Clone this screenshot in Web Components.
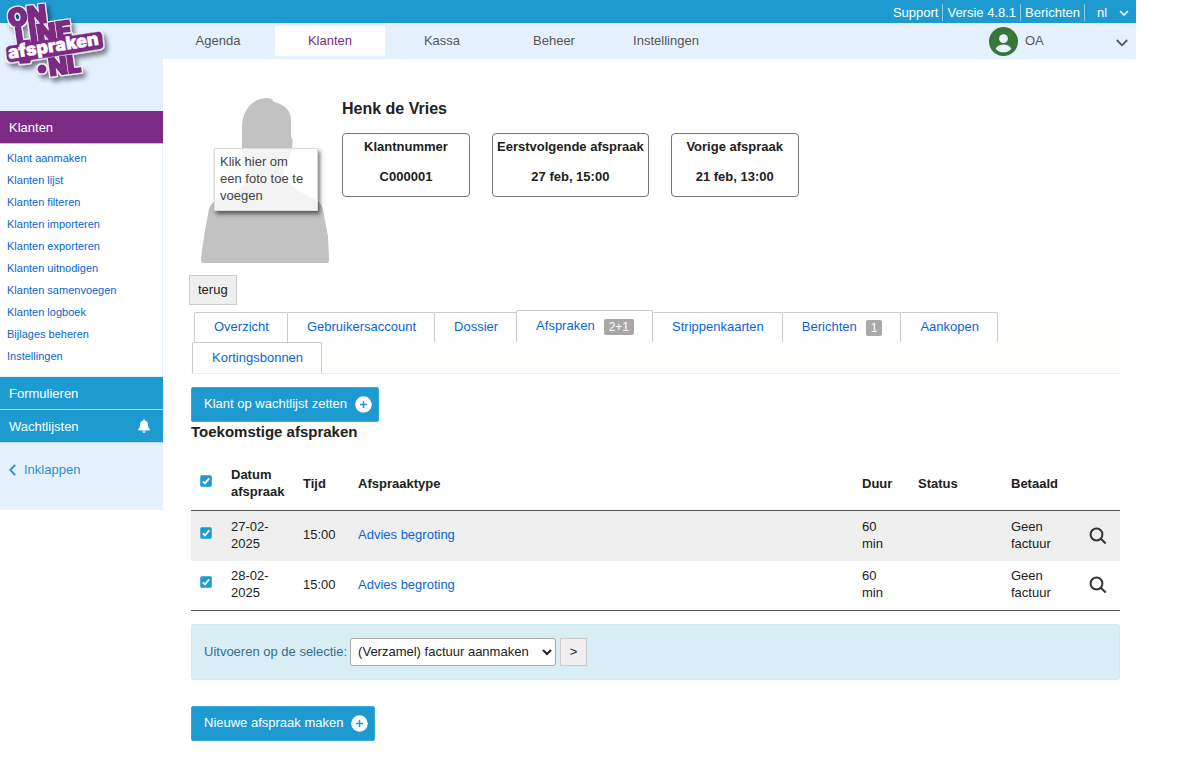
<!DOCTYPE html>
<html lang="nl">
<head>
<meta charset="utf-8">
<meta name="viewport" content="width=device-width, initial-scale=1">
<title>Klanten - Henk de Vries</title>
<style>
  html { background: #fff; }
  body {
    margin: 0;
    --blue: #1d9bd1;
    --purple: #7b2b83;
    --pale: #e5f1ff;
    --link: #0a66cf;
    color: #212121;
    font: 13px/17px "Liberation Sans", Arial, sans-serif;
  }
</style>
</head>
<body>
<oa-app></oa-app>

<script>
const define = (name, html, setup) => {
  const template = document.createElement('template');
  template.innerHTML = `<style>*{box-sizing:border-box}a{text-decoration:none}button,select{font:inherit;margin:0}:host([hidden]){display:none}</style>` + html;
  customElements.define(name, class extends HTMLElement {
    constructor() {
      super();
      this.attachShadow({ mode: 'open' }).append(template.content.cloneNode(true));
    }
    connectedCallback() { if (setup) setup(this, this.shadowRoot); }
  });
};

define('oa-logo', `
<style>
  :host { display: block; }
  a { display: block; width: 110px; height: 88px; }
  svg { display: block; overflow: visible; }
  text { font-family: Inter, "Liberation Sans", Arial, sans-serif; font-weight: 900; }
</style>
<a href="#" aria-label="Onlineafspraken.nl">
  <svg width="110" height="88" viewBox="0 0 110 88">
    <defs>
      <filter id="edge" x="-20%" y="-20%" width="150%" height="150%">
        <feMorphology in="SourceAlpha" operator="dilate" radius="1.3" result="fat"/>
        <feFlood flood-color="#f4effa"/>
        <feComposite in2="fat" operator="in" result="rim"/>
        <feGaussianBlur in="fat" stdDeviation="2.5"/>
        <feOffset dx="3" dy="4"/>
        <feComponentTransfer result="shade"><feFuncA type="linear" slope=".5"/></feComponentTransfer>
        <feMerge><feMergeNode in="shade"/><feMergeNode in="rim"/><feMergeNode in="SourceGraphic"/></feMerge>
      </filter>
    </defs>
    <g filter="url(#edge)" fill="#7b2b83" stroke="#7b2b83" stroke-width="1.800">
      <text transform="translate(9 27) rotate(-7)" font-size="25">ON</text>
      <text transform="translate(17 46) rotate(-8)" font-size="25">LINE</text>
      <path stroke-width=".5" d="M9 46 Q6 47 6 50 L7 59 Q9 63 13 62 L19 61 L20 64 L30 63 L31 60 L57 56 L100 49 Q104 48 103 44 L102 35 Q101 31 97 32 L70 36 Z"/>
      <circle cx="42" cy="69" r="4.500" stroke="none"/>
      <text transform="translate(50 76) rotate(-8)" font-size="24">NL</text>
    </g>
    <text transform="translate(9 59) rotate(-9)" font-size="18" fill="#fff" stroke="#fff" stroke-width=".4">afspraken</text>
  </svg>
</a>`);

define('oa-topbar', `
<style>
  :host { display: flex; justify-content: flex-end; align-items: center; height: 23px; padding: 2px 7px 0 0; background: var(--blue); color: #fff; }
  a { color: #fff; padding: 0 4px; border-right: 1px solid #8ccbe8; }
  label { display: grid; align-items: center; margin-left: 12px; width: 32px; }
  select, svg { grid-area: 1 / 1; }
  select { appearance: none; border: 0; padding: 0; background: none; color: #fff; width: 32px; }
  option { color: #212121; }
  svg { justify-self: end; pointer-events: none; }
</style>
<a href="#">Support</a><a href="#">Versie 4.8.1</a><a href="#">Berichten</a>
<label><select aria-label="Taal"><option>nl</option></select>
  <svg width="10" height="6" viewBox="0 0 10 6" fill="none" stroke="#fff" stroke-width="1.6"><path d="M1 1l4 4 4-4"/></svg>
</label>`);

define('oa-nav', `
<style>
  :host { display: flex; align-items: center; height: 36px; background: var(--pale); }
  nav { display: flex; gap: 2px; }
  a { width: 110px; height: 30px; line-height: 29px; text-align: center; color: #555; }
  a[aria-current] { background: #fff; color: var(--purple); }
  button { display: flex; align-items: center; margin-left: auto; padding: 0; border: 0; background: none; color: #555; width: 147px; margin-right: 0; }
  .name { margin: -2px auto 0 7px; }
  .arrow { margin: 4px 8px 0 0; }
  .face { margin-top: 1px; }
</style>
<nav>
  <a href="#">Agenda</a><a href="#" aria-current="page">Klanten</a><a href="#">Kassa</a><a href="#">Beheer</a><a href="#">Instellingen</a>
</nav>
<button type="button">
  <svg class="face" width="29" height="29" viewBox="0 0 30 30"><circle cx="15" cy="15" r="15" fill="#37763b"/><circle cx="15" cy="12" r="4.6" fill="#e8f2fb"/><path d="M6.8 22.4c1.7-3.100 4.800-4.300 8.200-4.300s6.500 1.200 8.200 4.300c-1.800 2.300-5 3.800-8.200 3.800s-6.400-1.500-8.200-3.800z" fill="#e8f2fb"/></svg>
  <span class="name">OA</span>
  <svg class="arrow" width="12" height="8" viewBox="0 0 12 8" fill="none" stroke="#555" stroke-width="1.8"><path d="M.8 1L6 6.300 11.200 1"/></svg>
</button>`);

define('oa-side', `
<style>
  :host { display: block; background: var(--pale); padding-bottom: 32px; }
  .brand { height: 111px; }
  .head { display: flex; align-items: center; justify-content: space-between; height: 33px; padding: 0 13px 0 9px; color: #fff; background: var(--blue); border-bottom: 1px solid #b9dcf0; }
  .head.on { background: var(--purple); border-color: #cfb5d6; }
  ul { list-style: none; margin: 0 1px 1px 0; padding: 3px 7px 9px; background: #fff; font-size: 11px; line-height: 22px; }
  li a { color: var(--link); }
  button { display: flex; align-items: center; gap: 8px; margin: 18px 0 0 9px; padding: 0; border: 0; background: none; color: #2a93c8; }
</style>
<div class="brand"></div>
<a class="head on" href="#">Klanten</a>
<ul></ul>
<a class="head" href="#">Formulieren</a>
<a class="head" href="#">Wachtlijsten
  <svg width="12" height="14" viewBox="0 0 12 14" fill="#fff"><path d="M5.200 1a.8.8 0 0 1 1.600 0v.5c2 .4 3.200 2 3.200 4.100 0 2.700.8 3.600 1.600 4.500.6.700.2 1.500-.6 1.500H1c-.8 0-1.200-.8-.6-1.500C1.200 9.200 2 8.300 2 5.600 2 3.500 3.200 1.900 5.200 1.500z"/><path d="M4.500 12.300h3a1.500 1.500 0 0 1-3 0z"/></svg>
</a>
<button type="button"><svg width="7" height="12" viewBox="0 0 7 12" fill="none" stroke="#2a93c8" stroke-width="1.900"><path d="M6.200.8L1.200 6l5 5.200"/></svg>Inklappen</button>`,
(host, root) => {
  root.querySelector('ul').innerHTML = ['Klant aanmaken', 'Klanten lijst', 'Klanten filteren', 'Klanten importeren', 'Klanten exporteren', 'Klanten uitnodigen', 'Klanten samenvoegen', 'Klanten logboek', 'Bijlages beheren', 'Instellingen']
    .map(t => `<li><a href="#">${t}</a></li>`).join('');
});

define('oa-photo', `
<style>
  :host { display: grid; width: 128px; height: 166px; }
  svg, button { grid-area: 1 / 1; }
  button { align-self: start; margin: 51px 0 0 13px; width: 104px; height: 63px; padding: 0 5px 2px; text-align: left; line-height: 17px; color: #444; background: rgba(255,255,255,.8); border: 1px solid #ddd; box-shadow: 2px 3px 4px rgba(0,0,0,.55); }
</style>
<svg width="128" height="166" viewBox="0 0 128 166" fill="#c2c2c2"><path d="M66 1c3 0 5 1 7 4 2 0 4 1 6 2 8 4 11 9 11 16v17c2 2 2 6 1 10-1 9-4 15-8 22-2 6 1 11 8 17 8 6 16 10 24 14 4 2 6 5 7 10 2 9 3 18 5 26l1 22c0 3 0 5-2 5H2c-2 0-2-2-2-5 2-16 5-34 8-49 1-4 3-6 7-8 9-4 19-8 26-14 6-6 8-11 6-17-5-8-6-15-6-25V30C41 13 52 1 66 1z"/></svg>
<button type="button">Klik hier om een foto toe te voegen</button>`);

define('oa-fact', `
<style>
  :host { display: block; min-width: 128px; height: 64px; padding: 4px; border: 1px solid #777; border-radius: 4px; text-align: center; font-weight: 700; }
  .value { margin-top: 13px; }
</style>
<div><slot name="label"></slot></div><div class="value"><slot></slot></div>`);

define('oa-action', `
<style>
  :host { display: flex; }
  button { display: flex; align-items: center; gap: 8px; height: 35px; padding: 0 6px 2px 12px; border: 1px solid #3ba9d8; border-radius: 2px; background: var(--blue); color: #fff; }
  svg { margin-top: 2px; }
</style>
<button type="button"><slot></slot><svg width="17" height="17" viewBox="0 0 17 17"><circle cx="8.500" cy="8.500" r="8.300" fill="#fff"/><path d="M8.500 5v7M5 8.500h7" stroke="#1d9bd1" stroke-width="1.500"/></svg></button>`);

define('oa-tab', `
<style>
  :host { display: block; margin-left: -1px; }
  :host(:first-child) { margin-left: 1px; }
  a { display: flex; align-items: center; gap: 9px; height: 30px; padding: 0 18px 2px 19px; background: #fff; border: 1px solid #ccc; border-bottom: 0; border-radius: 2px 2px 0 0; color: var(--link); }
  :host([active]) a { height: 32px; }
  :host([last]) a { height: 31px; }
  b { display: block; height: 16px; margin-top: 2px; padding: 0 5px; border-radius: 2px; background: #a8a8a8; color: #fff; font-size: 12px; font-weight: 400; line-height: 17px; }
</style>
<a href="#"><slot></slot><b></b></a>`,
(host, root) => {
  const badge = root.querySelector('b');
  if (host.hasAttribute('count')) badge.textContent = host.getAttribute('count'); else badge.remove();
});

define('oa-tabs', `
<style>
  :host { display: flex; flex-wrap: wrap; align-items: flex-end; padding-left: 2px; border-bottom: 1px solid #eee; background: #fefefd; }
</style>
<slot></slot>`);

define('oa-appointments', `
<style>
  :host { display: block; }
  table { width: 100%; table-layout: fixed; border-collapse: collapse; border-bottom: 1px solid #555; }
  th, td { padding: 6px 10px 8px; text-align: left; vertical-align: middle; }
  th { padding: 12px 10px 10px; }
  thead { border-bottom: 1px solid #555; }
  td { height: 50px; }
  tbody tr:first-child { background: #efefef; }
  th:first-child, td:first-child { padding-left: 9px; padding-right: 0; }
  td:last-child { padding: 0; text-align: center; }
  .check { width: 30px } .date { width: 72px } .time { width: 55px } .span { width: 56px } .state { width: 93px } .paid { width: 75px } .look { width: 44px }
  input { display: block; appearance: none; width: 12px; height: 12px; margin: 0 0 4px; border: 1px solid #1684b5; border-radius: 2px; }
  input:checked { border-color: #4bb0dc; background: var(--blue) url("data:image/svg+xml,%3Csvg xmlns='http://www.w3.org/2000/svg' viewBox='0 0 11 11' fill='none' stroke='white' stroke-width='1.900'%3E%3Cpath d='M2 5.800l2.400 2.300L9 2.600'/%3E%3C/svg%3E"); }
  a { color: var(--link); }
  button { border: 0; padding: 0; background: none; display: block; margin: 0 auto; }
  svg { display: block; }
</style>
<table>
  <colgroup><col class="check"><col class="date"><col class="time"><col><col class="span"><col class="state"><col class="paid"><col class="look"></colgroup>
  <thead><tr><th><input type="checkbox" checked aria-label="Alles selecteren"></th><th>Datum afspraak</th><th>Tijd</th><th>Afspraaktype</th><th>Duur</th><th>Status</th><th>Betaald</th><th></th></tr></thead>
  <tbody></tbody>
</table>`,
(host, root) => {
  root.querySelector('tbody').innerHTML = ['27-02-2025', '28-02-2025'].map(d => `<tr>
    <td><input type="checkbox" checked aria-label="Selecteer ${d}"></td><td>${d}</td><td>15:00</td><td><a href="#">Advies begroting</a></td><td>60<br>min</td><td></td><td>Geen factuur</td>
    <td><button type="button" aria-label="Bekijken"><svg width="18" height="18" viewBox="0 0 18 18" fill="none" stroke="#333" stroke-width="2"><circle cx="7.500" cy="7.500" r="5.900"/><path d="M11.800 11.800l4.900 4.700"/></svg></button></td></tr>`).join('');
});

define('oa-bulk', `
<style>
  :host { display: flex; align-items: center; height: 56px; padding: 0 12px 1px; background: #d9edf5; border: 1px solid #ccebf3; border-radius: 2px; color: #31708f; }
  select { width: 206px; height: 28px; margin: 0 4px 0 3px; padding: 0 3px; background: #fff; color: #212121; border: 1px solid #aaa; border-radius: 3px; }
  button { width: 27px; height: 28px; padding: 0; border: 1px solid #ccc; background: #efefef; color: #212121; }
</style>
<label for="job">Uitvoeren op de selectie:</label>
<select id="job"><option>(Verzamel) factuur aanmaken</option></select>
<button type="button">&gt;</button>`);

define('oa-client', `
<style>
  :host { display: block; padding: 38px 16px 29px 28px; }
  .profile { display: flex; gap: 13px; padding-left: 10px; }
  h1 { margin: 0; padding: 1px 0 13px; font-size: 16px; line-height: 22px; }
  .facts { display: flex; gap: 22px; }
  .back { display: block; height: 30px; margin: 12px 0 5px -2px; padding: 0 8px 1px; border: 1px solid #ccc; background: #efefef; color: #212121; }
  h2 { margin: 0 0 12px; font-size: 15px; line-height: 20px; }
  oa-tabs { margin-bottom: 13px; }
  oa-bulk { margin: 13px 0 26px; }
</style>
<section class="profile">
  <oa-photo></oa-photo>
  <div>
    <h1>Henk de Vries</h1>
    <div class="facts">
      <oa-fact><span slot="label">Klantnummer</span>C000001</oa-fact>
      <oa-fact><span slot="label">Eerstvolgende afspraak</span>27 feb, 15:00</oa-fact>
      <oa-fact><span slot="label">Vorige afspraak</span>21 feb, 13:00</oa-fact>
    </div>
  </div>
</section>
<button class="back" type="button">terug</button>
<oa-tabs>
  <oa-tab>Overzicht</oa-tab><oa-tab>Gebruikersaccount</oa-tab><oa-tab>Dossier</oa-tab><oa-tab active count="2+1">Afspraken</oa-tab><oa-tab>Strippenkaarten</oa-tab><oa-tab count="1">Berichten</oa-tab><oa-tab>Aankopen</oa-tab><oa-tab last>Kortingsbonnen</oa-tab>
</oa-tabs>
<oa-action>Klant op wachtlijst zetten</oa-action>
<h2>Toekomstige afspraken</h2>
<oa-appointments></oa-appointments>
<oa-bulk></oa-bulk>
<oa-action>Nieuwe afspraak maken</oa-action>`);

define('oa-app', `
<style>
  :host { display: grid; grid-template-columns: 163px minmax(0, 1fr); align-items: start; margin-right: 64px; }
  oa-topbar { grid-column: 1 / 3; grid-row: 1; z-index: 1; }
  oa-logo { grid-area: 1 / 1 / 3 / 2; z-index: 1; height: 0; }
  oa-side { grid-area: 1 / 1 / 4 / 2; }
  oa-nav { grid-area: 2 / 2; }
  oa-client { grid-area: 3 / 2; }
</style>
<oa-side></oa-side>
<oa-topbar></oa-topbar>
<oa-logo></oa-logo>
<oa-nav></oa-nav>
<oa-client></oa-client>`);
</script>
</body>
</html>
